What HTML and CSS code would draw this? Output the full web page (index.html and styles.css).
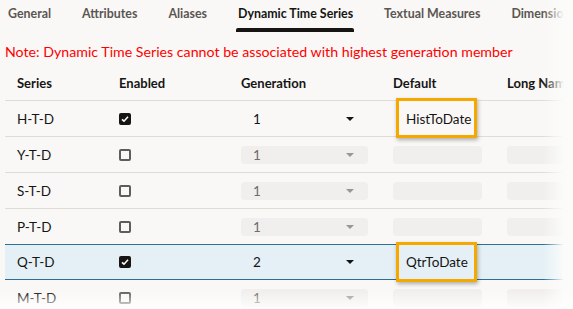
FILE: index.html
```html
<!DOCTYPE html>
<html lang="en">
  <head>
    <meta charset="utf-8" />
    <title>Dynamic Time Series</title>
    <link rel="stylesheet" href="styles.css">
  </head>
  <body>
    <div class="page">
      <div class="tabs">
        <div class="tab">General</div>
        <div class="tab">Attributes</div>
        <div class="tab">Aliases</div>
        <div class="tab active">Dynamic Time Series</div>
        <div class="tab">Textual Measures</div>
        <div class="tab">Dimension</div>
      </div>

      <div class="note">Note: Dynamic Time Series cannot be associated with highest generation member</div>

      <div class="grid">
        <div class="row head">
          <div class="c series">Series</div>
          <div class="c enabled">Enabled</div>
          <div class="c gen">Generation</div>
          <div class="c def">Default</div>
          <div class="c long">Long Name</div>
        </div>

        <div class="row">
          <div class="c series">H-T-D</div>
          <div class="c enabled"><span class="box checked"><svg viewBox="0 0 12 12"><path d="M3 6.3 L5 8.2 L9 3.8" /></svg></span></div>
          <div class="c gen"><div class="sel on"><span>1</span><i class="caret"></i></div></div>
          <div class="c def"><div class="field on">HistToDate</div><div class="callout"></div></div>
          <div class="c long"><div class="field on"></div></div>
        </div>

        <div class="row">
          <div class="c series">Y-T-D</div>
          <div class="c enabled"><span class="box"></span></div>
          <div class="c gen"><div class="sel"><span>1</span><i class="caret"></i></div></div>
          <div class="c def"><div class="field"></div></div>
          <div class="c long"><div class="field"></div></div>
        </div>

        <div class="row">
          <div class="c series">S-T-D</div>
          <div class="c enabled"><span class="box"></span></div>
          <div class="c gen"><div class="sel"><span>1</span><i class="caret"></i></div></div>
          <div class="c def"><div class="field"></div></div>
          <div class="c long"><div class="field"></div></div>
        </div>

        <div class="row">
          <div class="c series">P-T-D</div>
          <div class="c enabled"><span class="box"></span></div>
          <div class="c gen"><div class="sel"><span>1</span><i class="caret"></i></div></div>
          <div class="c def"><div class="field"></div></div>
          <div class="c long"><div class="field"></div></div>
        </div>

        <div class="row picked">
          <div class="c series">Q-T-D</div>
          <div class="c enabled"><span class="box checked"><svg viewBox="0 0 12 12"><path d="M3 6.3 L5 8.2 L9 3.8" /></svg></span></div>
          <div class="c gen"><div class="sel on"><span>2</span><i class="caret"></i></div></div>
          <div class="c def"><div class="field on">QtrToDate</div><div class="callout"></div></div>
          <div class="c long"><div class="field on"></div></div>
        </div>

        <div class="row">
          <div class="c series">M-T-D</div>
          <div class="c enabled"><span class="box"></span></div>
          <div class="c gen"><div class="sel"><span>1</span><i class="caret"></i></div></div>
          <div class="c def"><div class="field"></div></div>
          <div class="c long"><div class="field"></div></div>
        </div>
      </div>

      <!-- the screenshot fades out on the right and at the bottom -->
      <div class="fade-right"></div>
      <div class="fade-bottom"></div>
    </div>
  </body>
</html>
```

FILE: styles.css
```css
body {
  margin: 0;
  background-color: #f9f8f6;
  font-family: "Lato", "Noto Sans", sans-serif;
  color: #161513;
}

.page {
  position: relative;
  width: 573px;
  height: 309px;
  overflow: hidden;
}

.tabs {
  display: flex;
  height: 31px;
  padding-left: 8px;
  gap: 31px;
  white-space: nowrap;
}

.tab {
  font-size: 12.4px;
  font-weight: 700;
  color: #5b5652;
  line-height: 28px;
  position: relative;
}

.tab.active {
  color: #161513;
}

/* the dark bar under the current tab */
.tab.active::after {
  content: "";
  position: absolute;
  left: -2px;
  right: -1px;
  bottom: -1px;
  height: 4px;
  border-radius: 2px 2px 0 0;
  background-color: #161513;
}

.note {
  color: #ff0000;
  font-size: 14.2px;
  padding: 12px 0 0 5px;
  height: 22px;
  white-space: nowrap;
}

.grid {
  margin-left: 5px;
  width: 620px;
}

.row {
  display: flex;
  height: 35px;
  align-items: center;
  border-bottom: 1px solid #dfdcd8;
  font-size: 13.5px;
}

.row.head {
  font-weight: 700;
  font-size: 13px;
}

.row.picked {
  background-color: #e4f0f6;
  border-top: 1px solid #2b6f96;
  border-bottom: 1px solid #2b6f96;
  height: 34px;
  margin-top: -1px;
}

.c {
  padding-left: 12px;
  box-sizing: border-box;
  height: 100%;
  display: flex;
  align-items: center;
  position: relative;
  white-space: nowrap;
}

.series { width: 102px; }
.enabled { width: 122px; }
.gen { width: 152px; }
.def { width: 114px; }
.long { flex: 1; }

.box {
  width: 12px;
  height: 12px;
  box-sizing: border-box;
  border: 2px solid #5f5c59;
  border-radius: 2px;
  display: inline-block;
}

.box.checked {
  background-color: #161513;
  border-color: #161513;
}

.box svg {
  display: block;
  width: 12px;
  height: 12px;
  margin: -2px;
}

.box path {
  fill: none;
  stroke: #fff;
  stroke-width: 1.6;
}

.sel {
  width: 127px;
  height: 18px;
  border-radius: 4px;
  background-color: #f0efed;
  display: flex;
  align-items: center;
  justify-content: space-between;
  padding: 0 14px 0 12px;
  box-sizing: border-box;
  color: #6f6b67;
}

.sel.on {
  background-color: transparent;
  color: #161513;
}

.caret {
  width: 0;
  height: 0;
  border-left: 4px solid transparent;
  border-right: 4px solid transparent;
  border-top: 4px solid #9a9692;
}

.sel.on .caret {
  border-top-color: #161513;
}

.field {
  width: 89px;
  height: 18px;
  border-radius: 4px;
  background-color: #f0efed;
  display: flex;
  align-items: center;
  padding-left: 13px;
  box-sizing: border-box;
}

.field.on {
  background-color: transparent;
}

/* orange highlight drawn over the default cell */
.callout {
  position: absolute;
  left: 15px;
  top: -3px;
  width: 81px;
  height: 40px;
  box-sizing: border-box;
  border: 3px solid #f5a800;
  box-shadow: 1px 2px 4px rgba(0, 0, 0, 0.3);
}

.fade-right {
  position: absolute;
  top: 0;
  right: 0;
  width: 30px;
  height: 100%;
  background: linear-gradient(to right, rgba(249, 248, 246, 0), #fbfbfa 70%);
}

.fade-bottom {
  position: absolute;
  left: 0;
  bottom: 0;
  width: 100%;
  height: 18px;
  background: linear-gradient(to bottom, rgba(255, 255, 255, 0), rgba(255, 255, 255, 0.85));
}
```
